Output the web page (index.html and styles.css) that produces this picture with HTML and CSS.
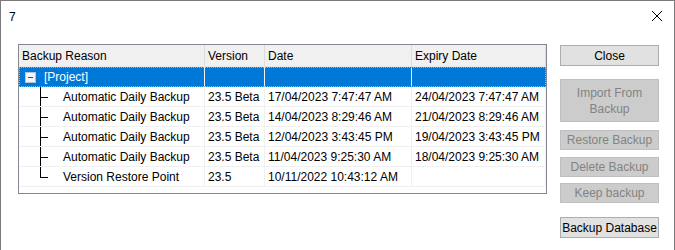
FILE: index.html
```html
<!DOCTYPE html>
<html lang="en">
<head>
  <meta charset="UTF-8">
  <title>7</title>
  <link rel="stylesheet" href="styles.css">
</head>
<body>

  <div class="window">
    <div class="titlebar">
      <span class="title">7</span>
      <svg class="close-x" width="12" height="12" viewBox="0 0 12 12">
        <path d="M1 1 L11 11 M11 1 L1 11" stroke="#000" stroke-width="1" fill="none"/>
      </svg>
    </div>

    <div class="content">
      <!-- Backup list -->
      <div class="listview">
        <div class="row header">
          <div class="cell c1">Backup Reason</div>
          <div class="cell c2">Version</div>
          <div class="cell c3">Date</div>
          <div class="cell c4">Expiry Date</div>
        </div>
        <div class="row selected">
          <div class="cell c1 tree">
            <span class="toggle"></span>
            <span class="focus-text">[Project]</span>
          </div>
          <div class="cell c2"></div>
          <div class="cell c3"></div>
          <div class="cell c4"></div>
        </div>
        <div class="row">
          <div class="cell c1 tree"><span class="branch"></span>Automatic Daily Backup</div>
          <div class="cell c2">23.5 Beta</div>
          <div class="cell c3">17/04/2023 7:47:47 AM</div>
          <div class="cell c4">24/04/2023 7:47:47 AM</div>
        </div>
        <div class="row">
          <div class="cell c1 tree"><span class="branch"></span>Automatic Daily Backup</div>
          <div class="cell c2">23.5 Beta</div>
          <div class="cell c3">14/04/2023 8:29:46 AM</div>
          <div class="cell c4">21/04/2023 8:29:46 AM</div>
        </div>
        <div class="row">
          <div class="cell c1 tree"><span class="branch"></span>Automatic Daily Backup</div>
          <div class="cell c2">23.5 Beta</div>
          <div class="cell c3">12/04/2023 3:43:45 PM</div>
          <div class="cell c4">19/04/2023 3:43:45 PM</div>
        </div>
        <div class="row">
          <div class="cell c1 tree"><span class="branch"></span>Automatic Daily Backup</div>
          <div class="cell c2">23.5 Beta</div>
          <div class="cell c3">11/04/2023 9:25:30 AM</div>
          <div class="cell c4">18/04/2023 9:25:30 AM</div>
        </div>
        <div class="row">
          <div class="cell c1 tree"><span class="branch last"></span>Version Restore Point</div>
          <div class="cell c2">23.5</div>
          <div class="cell c3">10/11/2022 10:43:12 AM</div>
          <div class="cell c4"></div>
        </div>
      </div>

      <!-- Actions -->
      <div class="actions">
        <button class="btn btn-close">Close</button>
        <button class="btn btn-import" disabled>Import From<br>Backup</button>
        <button class="btn btn-restore" disabled>Restore Backup</button>
        <button class="btn btn-delete" disabled>Delete Backup</button>
        <button class="btn btn-keep" disabled>Keep backup</button>
        <button class="btn btn-db">Backup Database</button>
      </div>
    </div>
  </div>

</body>
</html>
```

FILE: styles.css
```css
* {
  margin: 0;
  padding: 0;
  box-sizing: border-box;
}

body, html {
  height: 100%;
  font-family: 'Liberation Sans', Arial, sans-serif;
  font-size: 12px;
  color: #000;
  background: #fff;
  overflow: hidden;
}

.window {
  width: 675px;
  height: 250px;
  border: 1px solid #7a7a7a;
  border-bottom: none;
  background: #fff;
}

.titlebar {
  height: 30px;
  display: flex;
  align-items: center;
  justify-content: space-between;
  padding: 0 11px 0 8px;
}

.title {
  font-size: 12px;
  margin-top: 1px;
}

.close-x {
  display: block;
}

.content {
  display: flex;
  padding: 13px 0 0 17px;
  gap: 13px;
}

/* list view */
.listview {
  width: 529px;
  height: 150px;
  border: 1px solid #828790;
  background: #fff;
}

.row {
  display: flex;
  height: 20px;
}

.cell {
  height: 100%;
  display: flex;
  align-items: center;
  padding-left: 3px;
  border-right: 1px solid #f0f0f0;
  border-bottom: 1px solid #f0f0f0;
  white-space: nowrap;
  overflow: hidden;
}

.c1 { width: 186px; }
.c2 { width: 60px; }
.c3 { width: 147px; }
.c4 { width: 134px; }

.row.header {
  height: 22px;
  background: #f0f0f0;
}

.row.header .cell {
  border-right: 1px solid #dcdcdc;
  border-bottom: 1px solid #e5e5e5;
}

.row.selected {
  background: #0078d7;
  color: #fff;
  outline: 1px dotted #ff9a3c;
  outline-offset: -1px;
}

.row.selected .cell {
  border-right-color: #f0f0f0;
  border-bottom-color: #0078d7;
}

.row.selected .cell.c4 {
  border-right: 1px dotted #000;
}

.tree {
  padding-left: 6px;
}

.toggle {
  width: 11px;
  height: 11px;
  border: 1px solid #b8c4d4;
  background: linear-gradient(#3a4a5e, #3a4a5e) center / 5px 1px no-repeat, #f4f4f4;
  margin-right: 8px;
  margin-top: 1px;
}

.branch {
  width: 23px;
  height: 20px;
  margin-left: 15px;
  background:
    linear-gradient(#000, #000) 0 0 / 1px 100% no-repeat,
    linear-gradient(#000, #000) 0 10px / 8px 1px no-repeat;
}

.branch.last {
  background:
    linear-gradient(#000, #000) 0 0 / 1px 11px no-repeat,
    linear-gradient(#000, #000) 0 10px / 8px 1px no-repeat;
}

/* buttons */
.actions {
  display: flex;
  flex-direction: column;
  width: 99px;
  padding-top: 1px;
}

.btn {
  font-family: 'Liberation Sans', Arial, sans-serif;
  font-size: 12px;
  height: 21px;
  background: #e1e1e1;
  border: 1px solid #adadad;
  color: #000;
  line-height: 14px;
}

.btn:disabled {
  background: #cccccc;
  border-color: #bfbfbf;
  color: #838383;
}

.btn-import {
  height: 43px;
  margin-top: 13px;
  line-height: 16px;
}

.btn-restore { margin-top: 8px; height: 20px; }
.btn-delete { margin-top: 7px; height: 20px; }
.btn-keep { margin-top: 6px; height: 20px; }
.btn-db { margin-top: 14px; }
```
